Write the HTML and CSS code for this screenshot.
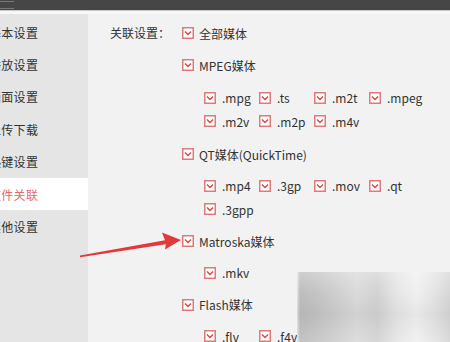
FILE: index.html
```html
<!DOCTYPE html>
<html lang="zh-CN">
<head>
<meta charset="utf-8">
<link rel="stylesheet" href="styles.css">
</head>
<body>
<div class="app">
  <div class="titlebar"><span class="logo"></span></div>
  <div class="topline"></div>
  <div class="body">
    <nav class="sidebar">
      <div class="nav-item"><span class="nav-text">基本设置</span></div>
      <div class="nav-item"><span class="nav-text">播放设置</span></div>
      <div class="nav-item"><span class="nav-text">画面设置</span></div>
      <div class="nav-item"><span class="nav-text">上传下载</span></div>
      <div class="nav-item"><span class="nav-text">热键设置</span></div>
      <div class="nav-item active"><span class="nav-text">文件关联</span></div>
      <div class="nav-item"><span class="nav-text">其他设置</span></div>
    </nav>
    <main class="main">
      <div class="label">关联设置：</div>
      <div class="options">
        <div class="head"><span class="cb"><svg viewBox="0 0 12 12"><rect x="0.75" y="0.75" width="10.5" height="10.5"/><polyline points="3,4.5 6,7.5 9,4.5"/></svg></span>全部媒体</div>

        <div class="head g12"><span class="cb"><svg viewBox="0 0 12 12"><rect x="0.75" y="0.75" width="10.5" height="10.5"/><polyline points="3,4.5 6,7.5 9,4.5"/></svg></span>MPEG媒体</div>
        <div class="sub s11">
          <div class="item"><span class="cb"><svg viewBox="0 0 12 12"><rect x="0.75" y="0.75" width="10.5" height="10.5"/><polyline points="3,4.5 6,7.5 9,4.5"/></svg></span>.mpg</div>
          <div class="item"><span class="cb"><svg viewBox="0 0 12 12"><rect x="0.75" y="0.75" width="10.5" height="10.5"/><polyline points="3,4.5 6,7.5 9,4.5"/></svg></span>.ts</div>
          <div class="item"><span class="cb"><svg viewBox="0 0 12 12"><rect x="0.75" y="0.75" width="10.5" height="10.5"/><polyline points="3,4.5 6,7.5 9,4.5"/></svg></span>.m2t</div>
          <div class="item"><span class="cb"><svg viewBox="0 0 12 12"><rect x="0.75" y="0.75" width="10.5" height="10.5"/><polyline points="3,4.5 6,7.5 9,4.5"/></svg></span>.mpeg</div>
          <div class="item"><span class="cb"><svg viewBox="0 0 12 12"><rect x="0.75" y="0.75" width="10.5" height="10.5"/><polyline points="3,4.5 6,7.5 9,4.5"/></svg></span>.m2v</div>
          <div class="item"><span class="cb"><svg viewBox="0 0 12 12"><rect x="0.75" y="0.75" width="10.5" height="10.5"/><polyline points="3,4.5 6,7.5 9,4.5"/></svg></span>.m2p</div>
          <div class="item"><span class="cb"><svg viewBox="0 0 12 12"><rect x="0.75" y="0.75" width="10.5" height="10.5"/><polyline points="3,4.5 6,7.5 9,4.5"/></svg></span>.m4v</div>
        </div>

        <div class="head g11"><span class="cb"><svg viewBox="0 0 12 12"><rect x="0.75" y="0.75" width="10.5" height="10.5"/><polyline points="3,4.5 6,7.5 9,4.5"/></svg></span>QT媒体(QuickTime)</div>
        <div class="sub">
          <div class="item"><span class="cb"><svg viewBox="0 0 12 12"><rect x="0.75" y="0.75" width="10.5" height="10.5"/><polyline points="3,4.5 6,7.5 9,4.5"/></svg></span>.mp4</div>
          <div class="item"><span class="cb"><svg viewBox="0 0 12 12"><rect x="0.75" y="0.75" width="10.5" height="10.5"/><polyline points="3,4.5 6,7.5 9,4.5"/></svg></span>.3gp</div>
          <div class="item"><span class="cb"><svg viewBox="0 0 12 12"><rect x="0.75" y="0.75" width="10.5" height="10.5"/><polyline points="3,4.5 6,7.5 9,4.5"/></svg></span>.mov</div>
          <div class="item"><span class="cb"><svg viewBox="0 0 12 12"><rect x="0.75" y="0.75" width="10.5" height="10.5"/><polyline points="3,4.5 6,7.5 9,4.5"/></svg></span>.qt</div>
          <div class="item"><span class="cb"><svg viewBox="0 0 12 12"><rect x="0.75" y="0.75" width="10.5" height="10.5"/><polyline points="3,4.5 6,7.5 9,4.5"/></svg></span>.3gpp</div>
        </div>

        <div class="head g10"><span class="cb"><svg viewBox="0 0 12 12"><rect x="0.75" y="0.75" width="10.5" height="10.5"/><polyline points="3,4.5 6,7.5 9,4.5"/></svg></span>Matroska媒体</div>
        <div class="sub">
          <div class="item"><span class="cb"><svg viewBox="0 0 12 12"><rect x="0.75" y="0.75" width="10.5" height="10.5"/><polyline points="3,4.5 6,7.5 9,4.5"/></svg></span>.mkv</div>
        </div>

        <div class="head g10"><span class="cb"><svg viewBox="0 0 12 12"><rect x="0.75" y="0.75" width="10.5" height="10.5"/><polyline points="3,4.5 6,7.5 9,4.5"/></svg></span>Flash媒体</div>
        <div class="sub">
          <div class="item"><span class="cb"><svg viewBox="0 0 12 12"><rect x="0.75" y="0.75" width="10.5" height="10.5"/><polyline points="3,4.5 6,7.5 9,4.5"/></svg></span>.flv</div>
          <div class="item"><span class="cb"><svg viewBox="0 0 12 12"><rect x="0.75" y="0.75" width="10.5" height="10.5"/><polyline points="3,4.5 6,7.5 9,4.5"/></svg></span>.f4v</div>
        </div>
      </div>
    </main>
  </div>
  <svg class="arrow" width="450" height="342" viewBox="0 0 450 342">
    <polygon points="80,255.5 165,240.2 162,232.5 181,240 165,249.5 165.8,244.2 80,257.2"/>
  </svg>
  <div class="mosaic"></div>
</div>
</body>
</html>
```

FILE: styles.css
```css
html, body {
  margin: 0;
  padding: 0;
}
body {
  width: 450px;
  height: 342px;
  overflow: hidden;
  font-family: "Noto Sans CJK SC", "Noto Sans", sans-serif;
  font-size: 12px;
  color: #333;
  background: #f2f2f2;
}
.app {
  position: relative;
  width: 450px;
  height: 342px;
  overflow: hidden;
}
.titlebar {
  height: 10px;
  background: #464646;
  display: flex;
  align-items: center;
}
.logo {
  width: 14px;
  height: 6px;
  border-top: 1px solid #777;
  border-bottom: 1px solid #777;
}
.topline {
  height: 4px;
  background: #f7f7f7;
  border-top: 1px solid #c9c9c9;
  box-sizing: border-box;
}
.body {
  display: flex;
  height: 328px;
  overflow: hidden;
}
.sidebar {
  width: 88px;
  flex: none;
  background: #e5e5e5;
  padding-top: 2px;
  box-sizing: border-box;
}
.nav-item {
  height: 32.4px;
  display: flex;
  align-items: center;
  color: #333;
}
.nav-text {
  margin-left: -11px;
  letter-spacing: 0.3px;
  white-space: nowrap;
}
.nav-item.active {
  background: #fff;
  color: #e46a6a;
}
.main {
  flex: 1;
  display: flex;
  align-items: flex-start;
  padding-left: 22px;
  padding-top: 9px;
}
.label {
  width: 72px;
  flex: none;
  height: 20px;
  line-height: 20px;
}
.options {
  display: flex;
  flex-direction: column;
  flex: none;
}
.options > * {
  flex: none;
}
.head {
  height: 20px;
  display: flex;
  align-items: center;
  gap: 5px;
  white-space: nowrap;
}
.head.g12 { margin-top: 12px; }
.head.g11 { margin-top: 11px; }
.head.g10 { margin-top: 10px; }
.sub {
  display: grid;
  grid-template-columns: repeat(4, 55px);
  grid-auto-rows: 23.5px;
  margin-top: 10px;
  margin-left: 22px;
}
.sub.s11 { margin-top: 11px; }
.item {
  display: flex;
  align-items: center;
  gap: 6px;
  white-space: nowrap;
}
.cb {
  width: 12px;
  height: 12px;
  flex: none;
  display: block;
}
.cb svg {
  display: block;
  width: 12px;
  height: 12px;
}
.cb rect {
  fill: #fff;
  stroke: #e07a7a;
  stroke-width: 1.5;
}
.cb polyline {
  fill: none;
  stroke: #d64545;
  stroke-width: 1.4;
}
.arrow {
  position: absolute;
  left: 0;
  top: 0;
  pointer-events: none;
}
.arrow polygon {
  fill: #e23a3a;
}
.mosaic {
  position: absolute;
  left: 297px;
  top: 272px;
  width: 153px;
  height: 70px;
  background:
    linear-gradient(180deg, rgba(255,255,255,0.25) 0%, rgba(255,255,255,0) 30%, rgba(0,0,0,0.04) 60%, rgba(255,255,255,0.1) 100%),
    linear-gradient(90deg, #e6e6e6 0px, #bdbdbd 3px, #c4c4c4 20px, #cfcfcf 40px, #dadada 60px, #d2d2d2 80px, #e6e6e6 100px, #f0f0f0 120px, #e2e2e2 140px, #d6d6d6 153px);
}
```
